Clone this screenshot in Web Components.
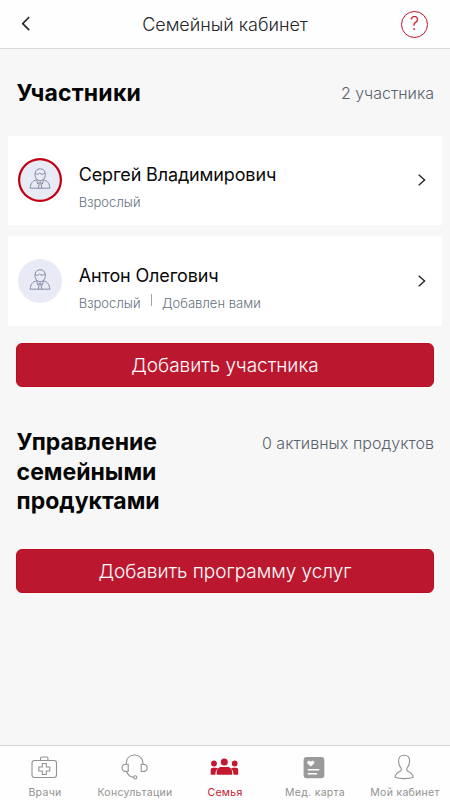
<!DOCTYPE html>
<html lang="ru">
<head>
<meta charset="utf-8">
<title>Семейный кабинет</title>
<style>
html,body{margin:0;height:100%}
body{font-family:Inter,"Liberation Sans",sans-serif;background:#f7f7f7;overflow:hidden}
</style>
</head>
<body>
<family-app></family-app>
<script>
const define = (name, html, setup) => customElements.define(name, class extends HTMLElement {
  connectedCallback() {
    if (this.shadowRoot) return;
    const t = document.createElement('template');
    t.innerHTML = html;
    this.attachShadow({mode: 'open'}).append(t.content.cloneNode(true));
    if (setup) setup(this, this.shadowRoot);
  }
});

define('nav-header', `
<style>
:host{display:grid;grid-template-columns:52px 1fr 52px;align-items:center;height:48px;background:#fefefe;border-bottom:1px solid #d9dada}
.title{text-align:center;font-size:18px;font-weight:330;line-height:24px;color:#242628;letter-spacing:-.03px;white-space:nowrap;padding-top:1px}
svg{display:block}
.help{justify-self:start;box-sizing:border-box;width:27px;height:27px;border:1.300px solid #c4122a;border-radius:50%;color:#c4122a;font-size:18px;font-weight:300;display:grid;place-items:center;line-height:1;margin-left:3px}
</style>
<svg width="52" height="48" fill="none" stroke="#26282a" stroke-width="1.700" stroke-linecap="round" stroke-linejoin="round"><path d="M28.700 17.500 22.700 23.600l6 6"/></svg>
<span class="title"><slot></slot></span>
<span class="help">?</span>`);

define('section-head', `
<style>
:host{display:flex;justify-content:space-between;padding:0 16px}
h2{margin:0;font-size:23px;line-height:29.500px;font-weight:700;color:#050505;letter-spacing:var(--ls,0);width:160px;padding-left:.6px}
.note{font-size:16px;line-height:24px;font-weight:330;color:#57626d;letter-spacing:var(--ns,0);padding-top:var(--nt,3px);white-space:nowrap}
</style>
<h2><slot></slot></h2><span class="note"><slot name="note"></slot></span>`);

define('user-avatar', `
<style>
:host{display:block;width:44px;height:44px;border-radius:50%;background:#e8ebf5;box-sizing:border-box}
:host([active]){box-shadow:inset 0 0 0 2.200px #c2000f}
svg{display:block}
</style>
<svg width="44" height="44" fill="none" stroke="#7b819b" stroke-width=".9" stroke-linejoin="round"><path d="M17 16.300c0-3.500 2-5.500 5.100-5.500s5.200 2 5.200 5.500c0 3.700-2.200 6.400-5.200 6.400S17 20 17 16.300ZM17 15.700c2 .8 3.600.5 4.600-.6 1.600 1.500 3.700 1.200 5.600-.1M18.600 21.700c-4 1.200-6 3.600-6.500 8.500h19.800c-.5-4.900-2.500-7.300-6.500-8.500M18.600 21.700l1.200 4.300 2.300-2.200 2.300 2.200 1.100-4.300M21.200 25.800l-.8 4.400M22.100 24v2.300M23 25.800l.8 4.400"/></svg>`);

define('member-card', `
<style>
:host{display:flex;align-items:center;height:89.500px;margin:0 8px;background:#fff;box-sizing:border-box;padding:0 10px}
.body{flex:1;padding:var(--bt,14px) 0 0 16.700px}
.name{font-size:18px;font-weight:400;line-height:24px;color:#0a0a0a;letter-spacing:-.14px}
.meta{display:flex;font-size:13px;font-weight:330;line-height:20px;color:#65717e;margin-top:5px;letter-spacing:.04px}
::slotted([slot=extra]){margin-left:20px}
.bar{width:1px;height:12px;background:#9fa5ac;margin:1px -10.500px 0 10.800px}
.bar[hidden]{display:none}
svg{display:block}
</style>
<user-avatar></user-avatar>
<div class="body"><div class="name"><slot></slot></div><div class="meta"><slot name="role"></slot><i class="bar"></i><slot name="extra"></slot></div></div>
<svg width="20" height="20" fill="none" stroke="#232527" stroke-width="1.400"><path d="m6.700 4.700 5.900 5.300-5.900 5.300"/></svg>`,
(h, r) => {
  if (h.hasAttribute('active')) r.querySelector('user-avatar').setAttribute('active', '');
  r.querySelector('.bar').hidden = !h.querySelector('[slot=extra]');
});

define('action-button', `
<style>
:host{display:block;margin:0 16px}
button{display:block;width:100%;height:44.500px;border:1px solid #bd0d22;border-radius:6px;background:#bb182f;color:#fff;font:330 19px/40px Inter,"Liberation Sans",sans-serif;letter-spacing:-.03px;padding:2px 0 0;white-space:nowrap}
</style>
<button><span><slot></slot></span></button>`);

const icons = {
 doctors:'<rect x="8" y="8.500" width="24.500" height="17" rx="2.500"/><path d="M16.500 8.500v-2q0-1.500 1.500-1.500h4.500q1.500 0 1.500 1.500v2M18.300 11.500h4v3.500h3.500v4h-3.500v3.500h-4V19h-3.500v-4h3.500z"/>',
 support:'<path d="M12.200 12.200C12.200 6.500 15.500 3 20.500 3s8.600 3.500 8.600 9.200M12.700 12.300h1.500v7.200h-1.500c-2.300 0-4.700-1-4.700-3.600s2.400-3.600 4.700-3.600ZM28.700 12.300h-1.500v7.200h1.500c2.300 0 4.500-1 4.500-3.600s-2.200-3.600-4.500-3.600ZM12.500 19.500c1.400 3.500 3.700 5.500 7.300 5.900"/><circle cx="21.300" cy="25.400" r="1.600"/>',
 family:'<g fill="#c4182f" stroke="none"><circle cx="10" cy="11.500" r="2.900"/><circle cx="20.300" cy="10" r="3.500"/><circle cx="30.700" cy="11.500" r="2.900"/><path d="M6.700 22.800v-5q0-2 2-2h3.200c1 0 1.600.3 2 .8-1.800 1.400-2.500 3.200-2.500 6.200ZM34.200 22.800v-5q0-2-2-2H29c-1 0-1.600.3-2 .8 1.800 1.400 2.500 3.200 2.500 6.200ZM12.700 22.800v-2.200c0-3.500 2-5.500 5-5.500H23c3.200 0 5.200 2 5.200 5.500v2.200Z"/></g>',
 card:'<rect x="9.600" y="5" width="20.700" height="21.200" rx="3" fill="#9a9a9a" stroke="none"/><path d="m16.800 14.500-3-2.800c-1.700-2 1-4 3-2 2-2 4.700 0 3 2Z" fill="#fff" stroke="none"/><path d="M13.800 17.700h11.500M13.800 21.700h9.300" stroke="#fff" stroke-width="1.400"/>',
 me:'<path d="M17.200 18.500v-2.200c-2.400-2.500-2.600-5-2.600-7.600 0-3.700 2.200-5.500 5.400-5.500s5.600 1.800 5.600 5.500c0 2.600-.4 5.100-2.700 7.600v2.200c0 1 5.900 1.500 6.300 6.800-4 1.800-14 1.800-18.200 0 .4-5.300 6.200-5.800 6.200-6.800Z"/>'
};
define('tab-item', `
<style>
:host{display:flex;flex-direction:column;align-items:center;color:#929292;font-size:10.500px;font-weight:400;line-height:16px;letter-spacing:.3px;padding-top:6px}
:host([active]){color:#c4182f}
svg{display:block;margin-right:1px}
span{margin-top:3px;white-space:nowrap}
</style>
<svg width="41" height="30" fill="none" stroke="#929292" stroke-width="1.100"></svg><span><slot></slot></span>`,
(h, r) => { r.querySelector('svg').innerHTML = icons[h.getAttribute('icon')]; });

define('tab-bar', `
<style>:host{display:grid;grid-template-columns:repeat(5,1fr);height:54px;background:#fefefe;border-top:1px solid #d8d8d8}</style><slot></slot>`);

define('family-app', `
<style>
:host{display:flex;flex-direction:column;height:800px;width:450px}
main{flex:1}
.h1{margin-top:30px;--ls:.2px;--nt:2px}
.c1{margin-top:27px}.c2{margin-top:11px;--bt:15px}
.b1{margin-top:17px}.h2{margin-top:41px;--ns:.04px}.b2{margin-top:32px}
</style>
<nav-header>Семейный кабинет</nav-header>
<main>
<section-head class="h1">Участники<span slot="note">2 участника</span></section-head>
<member-card class="c1" active>Сергей Владимирович<span slot="role">Взрослый</span></member-card>
<member-card class="c2">Антон Олегович<span slot="role">Взрослый</span><span slot="extra">Добавлен вами</span></member-card>
<action-button class="b1">Добавить участника</action-button>
<section-head class="h2">Управление семейными продуктами<span slot="note">0 активных продуктов</span></section-head>
<action-button class="b2">Добавить программу услуг</action-button>
</main>
<tab-bar>
<tab-item icon="doctors">Врачи</tab-item><tab-item icon="support">Консультации</tab-item><tab-item icon="family" active>Семья</tab-item><tab-item icon="card">Мед. карта</tab-item><tab-item icon="me">Мой кабинет</tab-item>
</tab-bar>`);
</script>
</body>
</html>
